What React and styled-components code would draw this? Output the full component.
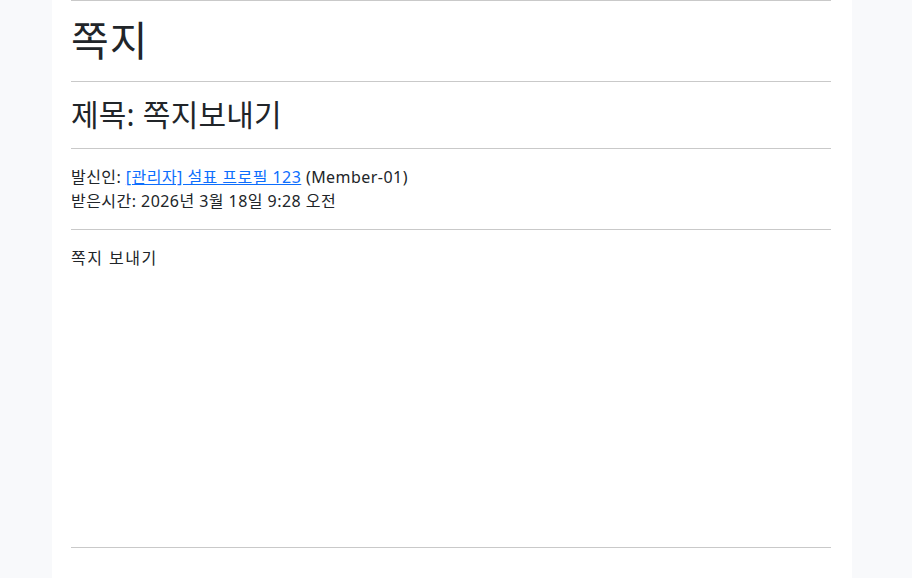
import React from 'react';
import styled, { createGlobalStyle } from 'styled-components';

const GlobalStyle = createGlobalStyle`
  html, body {
    margin: 0;
    padding: 0;
    background: #f8f9fb;
  }
  body {
    font-family: "Noto Sans", "Noto Sans CJK KR", sans-serif;
    color: #212529;
  }
`;

const Page = styled.div`
  width: 800px;
  min-height: 578px;
  margin-left: 52px;
  background: #fff;
  padding: 0 21px 0 19px;
  box-sizing: border-box;
`;

const Section = styled.div`
  border-top: 1px solid #c9c9c9;
  display: flex;
  flex-direction: column;
  justify-content: ${p => (p.$top ? 'flex-start' : 'center')};
  height: ${p => p.$height}px;
  padding-top: ${p => p.$padTop || 0}px;
  box-sizing: border-box;
`;

const Title = styled.h1`
  margin: 0;
  font-size: 41px;
  font-weight: 400;
  line-height: 1.2;
  letter-spacing: 1px;
`;

const Subject = styled.h2`
  margin: 0;
  font-size: 30px;
  font-weight: 400;
  line-height: 1.2;
  letter-spacing: 0.2px;
`;

const MetaLine = styled.div`
  font-size: 16px;
  line-height: 24px;
  letter-spacing: 0.45px;
`;

const SenderLink = styled.a`
  color: #0d6efd;
  text-decoration: underline;
  cursor: pointer;
`;

const Body = styled.div`
  font-size: 16px;
  line-height: 24px;
  letter-spacing: 1.5px;
`;

const Footer = styled.div`
  border-top: 1px solid #c9c9c9;
  height: 30px;
`;

export default function App() {
  return (
    <>
      <GlobalStyle />
      <Page>
        <Section $height={81}>
          <Title>쪽지</Title>
        </Section>
        <Section $height={67}>
          <Subject>제목: 쪽지보내기</Subject>
        </Section>
        <Section $height={81}>
          <MetaLine>
            발신인: <SenderLink>[관리자] 설표 프로필 123</SenderLink> (Member-01)
          </MetaLine>
          <MetaLine>받은시간: 2026년 3월 18일 9:28 오전</MetaLine>
        </Section>
        <Section $height={318} $top $padTop={16}>
          <Body>쪽지 보내기</Body>
        </Section>
        <Footer />
      </Page>
    </>
  );
}
